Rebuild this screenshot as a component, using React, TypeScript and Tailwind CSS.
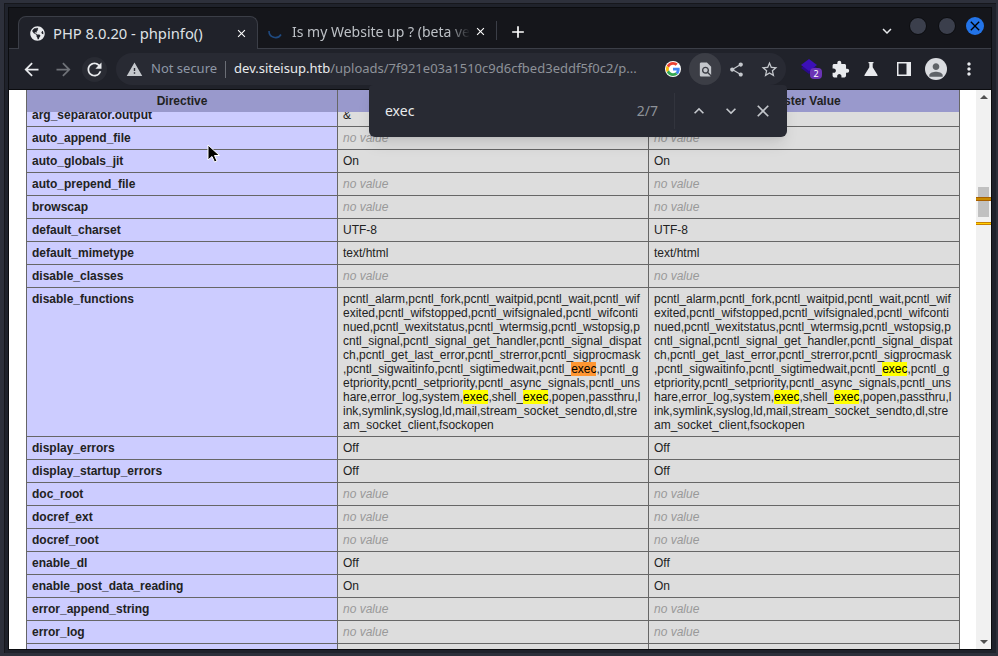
import React from 'react';
import { FaGlobeAmericas } from 'react-icons/fa';
import {
  MdAdd,
  MdArrowBack,
  MdArrowForward,
  MdClose,
  MdExtension,
  MdFindInPage,
  MdKeyboardArrowDown,
  MdKeyboardArrowUp,
  MdMoreVert,
  MdPerson,
  MdRefresh,
  MdShare,
  MdStarBorder,
  MdWarning,
} from 'react-icons/md';

const rows = [
  { name: 'arg_separator.output', value: '&' },
  { name: 'auto_append_file', value: null },
  { name: 'auto_globals_jit', value: 'On' },
  { name: 'auto_prepend_file', value: null },
  { name: 'browscap', value: null },
  { name: 'default_charset', value: 'UTF-8' },
  { name: 'default_mimetype', value: 'text/html' },
  { name: 'disable_classes', value: null },
  { name: 'disable_functions', value: 'funcs' },
  { name: 'display_errors', value: 'Off' },
  { name: 'display_startup_errors', value: 'Off' },
  { name: 'doc_root', value: null },
  { name: 'docref_ext', value: null },
  { name: 'docref_root', value: null },
  { name: 'enable_dl', value: 'Off' },
  { name: 'enable_post_data_reading', value: 'On' },
  { name: 'error_append_string', value: null },
  { name: 'error_log', value: null },
  { name: 'error_prepend_string', value: null },
];

// phpinfo breaks this value mid word, so the lines are kept as they wrap in the browser
const Funcs = ({ current }: { current: boolean }) => (
  <div className="whitespace-nowrap">
    pcntl_alarm,pcntl_fork,pcntl_waitpid,pcntl_wait,pcntl_wif
    <br />
    exited,pcntl_wifstopped,pcntl_wifsignaled,pcntl_wifconti
    <br />
    nued,pcntl_wexitstatus,pcntl_wtermsig,pcntl_wstopsig,p
    <br />
    cntl_signal,pcntl_signal_get_handler,pcntl_signal_dispat
    <br />
    ch,pcntl_get_last_error,pcntl_strerror,pcntl_sigprocmask
    <br />
    ,pcntl_sigwaitinfo,pcntl_sigtimedwait,pcntl_
    <span className={current ? 'bg-[#ff9632] text-black' : 'bg-[#ffff00] text-black'}>exec</span>
    ,pcntl_g
    <br />
    etpriority,pcntl_setpriority,pcntl_async_signals,pcntl_uns
    <br />
    hare,error_log,system,<span className="bg-[#ffff00] text-black">exec</span>,shell_
    <span className="bg-[#ffff00] text-black">exec</span>,popen,passthru,l
    <br />
    ink,symlink,syslog,ld,mail,stream_socket_sendto,dl,stre
    <br />
    am_socket_client,fsockopen
  </div>
);

const Value = ({ value, current }: { value: string | null; current: boolean }) => {
  if (value === null) return <i className="text-[#999999]">no value</i>;
  if (value === 'funcs') return <Funcs current={current} />;
  return <>{value}</>;
};

const GoogleG = () => (
  <div className="flex h-4 w-4 items-center justify-center rounded-full bg-white">
    <svg viewBox="0 0 48 48" className="h-3.5 w-3.5">
      <path fill="#EA4335" d="M24 9.5c3.5 0 6.700 1.200 9.200 3.600l6.900-6.900C35.900 2.400 30.500 0 24 0 14.600 0 6.500 5.400 2.600 13.200l8 6.200C12.500 13.600 17.800 9.500 24 9.500z" />
      <path fill="#4285F4" d="M46.900 24.500c0-1.600-.1-3.100-.4-4.500H24v9h12.900c-.6 3-2.200 5.500-4.700 7.200l7.700 6c4.500-4.200 7-10.300 7-17.700z" />
      <path fill="#FBBC05" d="M10.500 28.600c-.5-1.400-.8-3-.8-4.600s.3-3.200.8-4.600l-8-6.200C.9 16.500 0 20.100 0 24s.9 7.500 2.600 10.800l7.900-6.200z" />
      <path fill="#34A853" d="M24 48c6.500 0 11.900-2.100 15.900-5.800l-7.700-6c-2.100 1.400-4.900 2.300-8.200 2.300-6.200 0-11.500-4.200-13.400-9.800l-8 6.200C6.500 42.600 14.600 48 24 48z" />
    </svg>
  </div>
);

const Cursor = () => (
  <svg viewBox="0 0 14 20" className="absolute left-[198px] top-[54px] h-[20px] w-[14px]">
    <path d="M1 1v15l4-3.500 2.500 5.500 2.500-1-2.500-5.500H12.500z" fill="#000" stroke="#fff" strokeWidth="1" />
  </svg>
);

export default function App() {
  return (
    <div className="h-[656px] w-[998px] overflow-hidden bg-[#2d303b] pt-[3px] pl-1 pr-0.5 font-['Noto_Sans',sans-serif]">
      <div className="h-[650px] w-[992px] bg-[#1f222b] border-t border-l border-[#16171c] pt-[3px] pl-[3px] pr-1">
        <div className="flex h-[643px] w-[984px] flex-col border border-t border-[#0b0c0f]">
          {/* Tab strip */}
          <div className="relative flex h-[41px] shrink-0 items-end border-b border-[#3b3e47] bg-[#15161b] pl-[9px]">
            <div className="flex h-[33px] w-[240px] -mb-px items-center rounded-t-lg border border-b-0 border-[#3b3e47] bg-[#20222a] pl-[11px] pr-[9px] text-[14.75px] text-[#dfe1e5]">
              <FaGlobeAmericas className="mr-[8px] h-[15px] w-[15px] shrink-0 text-[#e8eaed]" />
              <span className="flex-1 whitespace-nowrap">PHP 8.0.20 - phpinfo()</span>
              <MdClose className="h-[13px] w-[13px] text-white" />
            </div>
            <div className="flex h-[33px] w-[238px] items-center pl-[9px] pr-[9px] text-sm text-[#bdc1c6]">
              <svg viewBox="0 0 16 16" className="mr-[9px] h-4 w-4 shrink-0">
                <path d="M2 7a6.500 6.500 0 0 0 12 3.500" fill="none" stroke="#1f4a80" strokeWidth="1.600" />
              </svg>
              <span className="w-[178px] overflow-hidden whitespace-nowrap [mask-image:linear-gradient(to_right,black_88%,transparent)]">
                Is my Website up ? (beta version)
              </span>
              <MdClose className="ml-auto h-[13px] w-[13px] text-white" />
            </div>
            <div className="mb-[8px] h-[19px] w-px bg-[#3b3e47]" />
            <MdAdd className="mb-[6px] ml-[11px] h-5 w-5 text-white" />
            <MdKeyboardArrowDown className="absolute left-[869px] top-[14px] h-[18px] w-[18px] text-[#e8eaed]" />
            <div className="absolute left-[900px] top-[9px] h-[18px] w-[18px] rounded-full border border-[#0b0c0f] bg-[#3b3f4c]" />
            <div className="absolute left-[929px] top-[9px] h-[18px] w-[18px] rounded-full border border-[#0b0c0f] bg-[#3b3f4c]" />
            <div className="absolute left-[957px] top-[9px] flex h-[18px] w-[18px] items-center justify-center rounded-full bg-[#2374e8]">
              <MdClose className="h-4 w-4 text-black" />
            </div>
          </div>

          {/* Toolbar */}
          <div className="flex h-[41px] shrink-0 items-center border-b border-[#0b0c0f] bg-[#20222a] pl-[12px]">
            <MdArrowBack className="h-[21px] w-[21px] text-[#e8eaed]" />
            <MdArrowForward className="ml-[11px] h-[21px] w-[21px] text-[#6f7278]" />
            <div className="ml-[8px] flex h-[25px] w-[25px] items-center justify-center rounded-full bg-[#292b33]">
              <MdRefresh className="h-[21px] w-[21px] text-[#e8eaed]" />
            </div>
            <div className="ml-[9px] flex h-8 w-[670px] shrink-0 items-center rounded-full bg-[#282a33] pl-[10px] text-[13px]">
              <MdWarning className="h-[17px] w-[17px] text-[#c4c7cc]" />
              <span className="ml-[8px] whitespace-nowrap text-[#8e97a6]">Not secure</span>
              <div className="ml-2 h-[17px] w-px bg-[#6b6e76]" />
              <span className="ml-2 w-[415px] whitespace-nowrap overflow-hidden">
                <span className="text-[#e8eaed]">dev.siteisup.htb</span>
                <span className="text-[#8e9299]">/uploads/7f921e03a1510c9d6cfbed3eddf5f0c2/p...</span>
              </span>
              <div className="ml-[16px]">
                <GoogleG />
              </div>
              <div className="ml-[8px] flex h-8 w-8 items-center justify-center rounded-full bg-[#3c3e46]">
                <MdFindInPage className="h-[17px] w-[17px] text-[#c4c7cc]" />
              </div>
              <MdShare className="ml-[7px] h-[17px] w-[17px] text-[#c4c7cc]" />
              <MdStarBorder className="ml-[15px] h-[19px] w-[19px] text-[#c4c7cc]" />
            </div>
            <div className="relative ml-[14px] h-6 w-6 shrink-0">
              <svg viewBox="0 0 20 20" className="absolute left-0 top-0 h-[20px] w-[20px]">
                <path d="M1 11l8-6 8 6-8 6z" fill="#2a0a8a" />
                <path d="M1 8l8-6 8 6-8 6z" fill="#3c10b8" />
              </svg>
              <div className="absolute left-[10px] top-[11px] flex h-[11px] w-3 items-center justify-center rounded-sm bg-[#6b34b5] text-[9px] text-white">
                2
              </div>
            </div>
            <MdExtension className="ml-[7px] h-[19px] w-[19px] shrink-0 text-[#e8eaed]" />
            <svg viewBox="0 0 16 16" className="ml-[13px] h-4 w-4 shrink-0 text-[#e8eaed]">
              <path d="M5.500 1h5v1.200h-.8v4L14.500 14c.3.600 0 1-.6 1H2.100c-.6 0-.9-.4-.6-1L6.300 6.200v-4h-.8z" fill="currentColor" />
            </svg>
            <svg viewBox="0 0 16 16" className="ml-[17px] h-4 w-4 shrink-0">
              <path d="M1 1h14v14H1zM2.500 2.500v11h8v-11z" fill="#e8eaed" fillRule="evenodd" />
            </svg>
            <div className="ml-[13px] flex h-[22px] w-[22px] shrink-0 items-end justify-center overflow-hidden rounded-full bg-[#dadce0]">
              <MdPerson className="h-[20px] w-[20px] text-[#5f6368]" />
            </div>
            <MdMoreVert className="ml-[12px] h-[20px] w-[20px] shrink-0 text-[#e8eaed]" />
          </div>

          {/* Page */}
          <div className="relative flex-1 overflow-hidden bg-white font-['Liberation_Sans',sans-serif] text-xs leading-[14px] text-[#222222]">
            <div className="ml-[17px] mt-[13px] w-[934px]">
              <table className="w-[933px] table-fixed border-collapse">
                <colgroup>
                  <col className="w-[311px]" />
                  <col className="w-[311px]" />
                  <col className="w-[311px]" />
                </colgroup>
                <tbody>
                  {rows.map((row) => (
                    <tr key={row.name}>
                      <td className="border border-[#666666] bg-[#ccccff] py-1 pl-[5px] pr-[5px] align-top font-bold">{row.name}</td>
                      <td className="border border-[#666666] bg-[#dddddd] py-1 pl-[5px] pr-[4.5px] align-top">
                        <Value value={row.value} current={true} />
                      </td>
                      <td className="border border-[#666666] bg-[#dddddd] py-1 pl-[5px] pr-[4.5px] align-top">
                        <Value value={row.value} current={false} />
                      </td>
                    </tr>
                  ))}
                </tbody>
              </table>
            </div>

            {/* Sticky header row */}
            <div className="absolute left-[17px] top-0 grid h-[22px] w-[934px] grid-cols-[311px_311px_312px] bg-[#9999cc] text-center font-bold leading-[22px]">
              <div className="border-l border-[#666666]">Directive</div>
              <div className="border-l border-[#666666]">Local Value</div>
              <div className="border-x border-[#666666]">Master Value</div>
            </div>

            <Cursor />

            {/* Scrollbar */}
            <div className="absolute bottom-0 right-0 top-0 w-[15px] bg-[#f1f1f1]">
              <div className="absolute left-[4px] top-[5px] h-0 w-0 border-x-[4px] border-b-[4px] border-x-transparent border-b-[#505050]" />
              <div className="absolute left-[2px] top-[97px] h-[30px] w-[11px] bg-[#c1c1c1]" />
              <div className="absolute left-0 top-[107px] h-1 w-full border-y border-[#a86000] bg-[#c88a00]" />
              <div className="absolute left-0 top-[132px] h-[3px] w-full border-y border-[#c98000] bg-[#ffd000]" />
              <div className="absolute bottom-[5px] left-[4px] h-0 w-0 border-x-[4px] border-t-[4px] border-x-transparent border-t-[#505050]" />
            </div>
          </div>

          {/* Find bar */}
          <div className="absolute left-[369px] top-[85px] flex h-[52px] w-[418px] items-center rounded-b-md rounded-t-sm bg-[#282a33] pl-4 pr-[14px] text-sm shadow-lg">
            <span className="flex-1 text-[#e8eaed]">exec</span>
            <span className="text-[#8e9299]">2/7</span>
            <div className="ml-4 mr-[14px] h-9 w-px bg-[#32343d]" />
            <MdKeyboardArrowUp className="h-5 w-5 text-[#c4c7cc]" />
            <MdKeyboardArrowDown className="ml-3 h-5 w-5 text-[#c4c7cc]" />
            <MdClose className="ml-3 h-5 w-5 text-[#c4c7cc]" />
          </div>
        </div>
      </div>
    </div>
  );
}
